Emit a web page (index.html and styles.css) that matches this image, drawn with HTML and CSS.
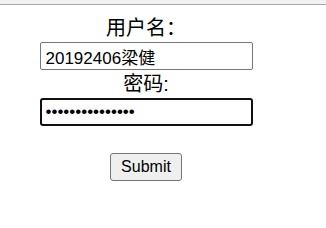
FILE: index.html
```html
<!DOCTYPE html>
<html lang="zh-CN">
<head>
    <meta charset="UTF-8">
    <title>登录</title>
    <link rel="stylesheet" href="styles.css">
</head>
<body>
    <div class="topbar"></div>

    <form class="login-form" action="#" method="post">
        <div class="label">用户名：</div>
        <input class="field" type="text" name="username" value="20192406梁健">
        <div class="label label-pwd">密码:</div>
        <input class="field field-focus" type="password" name="password" value="123456789012345">
        <div class="actions">
            <button class="submit-btn" type="submit">Submit</button>
        </div>
    </form>
</body>
</html>
```

FILE: styles.css
```css
body {
    margin: 0;
    background-color: #fff;
    color: #000;
    font-family: 'Liberation Sans', 'Noto Sans CJK SC', sans-serif;
}

.topbar {
    height: 4px;
    background-color: #f1f1f1;
    border-bottom: 1px solid #a8a8a8;
}

.login-form {
    width: 292px;
    padding-top: 9px;
    text-align: center;
}

.label {
    font-size: 20px;
    line-height: 28px;
}

.field {
    display: block;
    box-sizing: border-box;
    width: 213px;
    height: 28px;
    margin: 0 auto;
    padding: 1px 5px;
    font-family: 'Liberation Sans', 'Noto Sans CJK SC', sans-serif;
    font-size: 17px;
    color: #000;
    border: 1px solid #767676;
    border-radius: 2px;
    outline: none;
}

.field-focus {
    padding: 1px 4px;
    border: 2px solid #101010;
    border-radius: 3px;
}

.actions {
    padding-top: 27px;
}

.submit-btn {
    box-sizing: border-box;
    width: 72px;
    height: 28px;
    padding: 0;
    font-family: 'Liberation Sans', sans-serif;
    font-size: 16px;
    color: #000;
    background-color: #efefef;
    border: 1px solid #767676;
    border-radius: 3px;
}
```
